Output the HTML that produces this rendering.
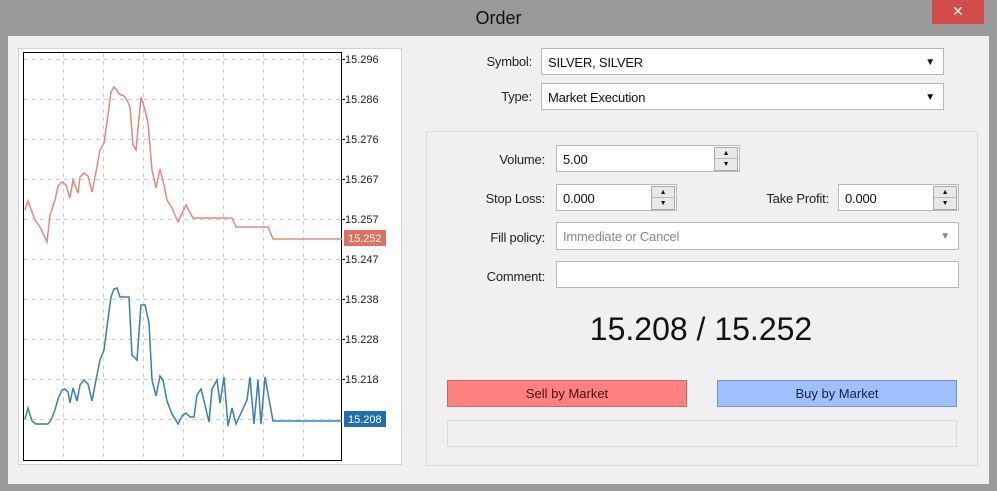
<!DOCTYPE html>
<html><head><meta charset="utf-8"><style>
*{margin:0;padding:0;box-sizing:border-box}
body{width:997px;height:491px;background:#999;font-family:"Liberation Sans",sans-serif;font-size:13px;color:#111;position:relative;overflow:hidden}
.a{position:absolute}
.title{left:0;top:0;width:997px;height:36px;text-align:center;font-size:18px;line-height:36px;color:#111}
.close{left:932px;top:0;width:52px;height:24px;background:#d24a4a;color:#fff;text-align:center;line-height:22px;font-size:14px}
.body{left:8px;top:36px;width:981px;height:448px;background:#f0f0f0}
.lbl{text-align:right;font-size:13px;color:#222;letter-spacing:-0.2px}
.in{background:#fff;border:1px solid #b8b8b8;padding-left:6px;font-size:13px;line-height:27px;letter-spacing:-0.2px}
.arr{position:absolute;right:8px;top:0;font-size:10px}
.spin{position:absolute;right:1px;top:1px;width:24px;height:24px;border:1px solid #aaa;background:#e8e8e8;font-size:7px;line-height:11px;text-align:center}
.spin div{height:11px;border-bottom:1px solid #bbb}
</style></head><body>
<div class="a title">Order</div>
<div class="a close">✕</div>
<div class="a body"></div>
<div class="a" style="left:18px;top:48px;width:384px;height:417px;background:#fff;border:1px solid #d4d4d4"></div>
<svg class="a" style="left:0;top:0" width="400" height="470">
<g stroke="#d0d0d0" stroke-dasharray="4,4" stroke-width="1">
<line x1="63.5" y1="53" x2="63.5" y2="460"/><line x1="103.5" y1="53" x2="103.5" y2="460"/><line x1="143.5" y1="53" x2="143.5" y2="460"/><line x1="183.5" y1="53" x2="183.5" y2="460"/><line x1="223.5" y1="53" x2="223.5" y2="460"/><line x1="263.5" y1="53" x2="263.5" y2="460"/><line x1="303.5" y1="53" x2="303.5" y2="460"/>
<line x1="24" y1="59.5" x2="341" y2="59.5"/><line x1="24" y1="99.5" x2="341" y2="99.5"/><line x1="24" y1="139.5" x2="341" y2="139.5"/><line x1="24" y1="179.5" x2="341" y2="179.5"/><line x1="24" y1="219.5" x2="341" y2="219.5"/><line x1="24" y1="259.5" x2="341" y2="259.5"/><line x1="24" y1="299.5" x2="341" y2="299.5"/><line x1="24" y1="339.5" x2="341" y2="339.5"/><line x1="24" y1="379.5" x2="341" y2="379.5"/><line x1="24" y1="419.5" x2="341" y2="419.5"/>
</g>
<rect x="23.5" y="52.5" width="318" height="408" fill="none" stroke="#000"/>
<polyline fill="none" stroke="#e08a80" stroke-width="1.5" points="25,210 28,201 35,220 40,227 47,242 50,215 55,200 58,186 62,182 66,185 70,198 73,180 78,193 80,177 84,173 88,176 92,192 96,172 100,150 104,143 108,115 111,92 114,87 117,90 119,94 124,96 127,100 130,107 133,145 136,150 141,97 145,110 148,123 152,170 156,188 160,169 164,185 167,200 172,208 178,222 186,205 193,218 232,218 236,227 268,227 273,239 342,239"/>
<polyline fill="none" stroke="#3a7fb0" stroke-width="1.5" points="25,419 28,408 32,421 36,424 48,424 51,420 55,410 58,399 62,390 65,389 68,392 70,403 73,388 77,401 80,385 84,380 88,384 92,401 96,380 100,360 104,350 108,319 111,297 114,289 117,288 120,297 129,297 132,355 137,360 141,305 145,305 149,323 152,380 156,396 160,376 163,380 167,401 172,414 178,424 182,416 186,413 190,417 194,417 197,395 201,389 205,405 209,422 212,389 217,380 220,403 224,377 228,426 232,408 236,424 247,400 250,377 254,424 258,380 261,424 265,377 273,421 342,421"/>
<g font-family="Liberation Sans" font-size="11" fill="#222">
<text x="345" y="63">15.296</text><text x="345" y="103">15.286</text><text x="345" y="143">15.276</text><text x="345" y="183">15.267</text><text x="345" y="223">15.257</text><text x="345" y="263">15.247</text><text x="345" y="303">15.238</text><text x="345" y="343">15.228</text><text x="345" y="383">15.218</text>
</g>
<g stroke="#000"><line x1="341" y1="59.5" x2="345" y2="59.5"/><line x1="341" y1="99.5" x2="345" y2="99.5"/><line x1="341" y1="139.5" x2="345" y2="139.5"/><line x1="341" y1="179.5" x2="345" y2="179.5"/><line x1="341" y1="219.5" x2="345" y2="219.5"/><line x1="341" y1="259.5" x2="345" y2="259.5"/><line x1="341" y1="299.5" x2="345" y2="299.5"/><line x1="341" y1="339.5" x2="345" y2="339.5"/><line x1="341" y1="379.5" x2="345" y2="379.5"/></g>
<rect x="344" y="230" width="42" height="16" fill="#e07060"/>
<text x="348" y="242" font-family="Liberation Sans" font-size="11" fill="#fff">15.252</text>
<rect x="344" y="411" width="42" height="16" fill="#1f6fb5"/>
<text x="348" y="423" font-family="Liberation Sans" font-size="11" fill="#fff">15.208</text>
</svg>

<div class="a lbl" style="left:440px;top:54px;width:92px">Symbol:</div>
<div class="a in" style="left:541px;top:48px;width:403px;height:27px">SILVER, SILVER<span class="arr">▼</span></div>
<div class="a lbl" style="left:440px;top:89px;width:92px">Type:</div>
<div class="a in" style="left:541px;top:83px;width:403px;height:27px">Market Execution<span class="arr">▼</span></div>

<div class="a" style="left:426px;top:131px;width:552px;height:335px;border:1px solid #dcdcdc;background:#f0f0f0"></div>
<div class="a lbl" style="left:440px;top:152px;width:105px">Volume:</div>
<div class="a in" style="left:556px;top:145px;width:184px;height:27px">5.00<div class="spin"><div>▲</div>▼</div></div>
<div class="a lbl" style="left:440px;top:191px;width:105px">Stop Loss:</div>
<div class="a in" style="left:556px;top:184px;width:121px;height:27px">0.000<div class="spin"><div>▲</div>▼</div></div>
<div class="a lbl" style="left:720px;top:191px;width:109px">Take Profit:</div>
<div class="a in" style="left:838px;top:184px;width:121px;height:27px">0.000<div class="spin"><div>▲</div>▼</div></div>
<div class="a lbl" style="left:440px;top:230px;width:105px">Fill policy:</div>
<div class="a in" style="left:556px;top:222px;width:403px;height:28px;color:#888">Immediate or Cancel<span class="arr" style="color:#888">▼</span></div>
<div class="a lbl" style="left:440px;top:269px;width:105px">Comment:</div>
<div class="a in" style="left:556px;top:261px;width:403px;height:27px"></div>
<div class="a" style="left:540px;top:311px;width:322px;text-align:center;font-size:32px;color:#111">15.208 / 15.252</div>
<div class="a" style="left:447px;top:380px;width:240px;height:27px;background:#ff8080;border:1px solid #c86a6a;text-align:center;line-height:25px;color:#4a1010">Sell by Market</div>
<div class="a" style="left:717px;top:380px;width:240px;height:27px;background:#9fbfff;border:1px solid #7a90c0;text-align:center;line-height:25px;color:#1a2040">Buy by Market</div>
<div class="a" style="left:447px;top:420px;width:510px;height:27px;border:1px solid #dadada;background:#f0f0f0"></div>
</body></html>
